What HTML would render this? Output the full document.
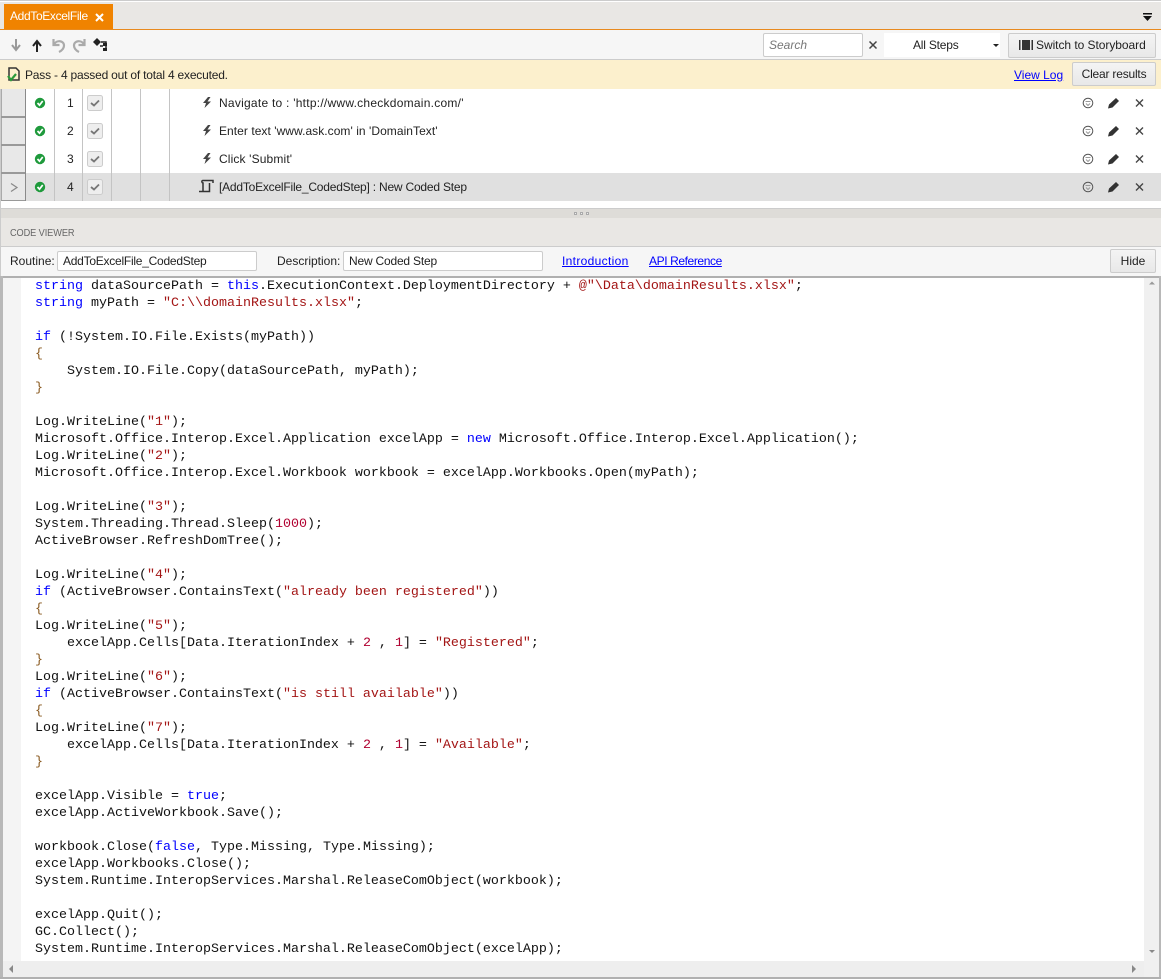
<!DOCTYPE html>
<html><head><meta charset="utf-8"><style>
html,body{margin:0;padding:0;background:#fff}
body{width:1161px;height:979px;position:relative;overflow:hidden;font-family:"Liberation Sans",sans-serif;font-size:12px;color:#222}
.a{position:absolute;white-space:nowrap}
.btn{position:absolute;box-sizing:border-box;background:linear-gradient(#f4f4f4,#e8e8e8);border:1px solid #ccc;border-radius:2px;text-align:center;color:#222}
.in{position:absolute;box-sizing:border-box;background:#fff;border:1px solid #ccc;border-radius:2px;line-height:18px;padding-left:5px}
.v{position:absolute;width:1px;background:#c4c4c4}
.t{position:absolute;left:219px;white-space:nowrap;line-height:16px}
a{color:#00f;text-decoration:underline;position:absolute;white-space:nowrap}
pre{position:absolute;left:35px;top:278px;margin:0;font:13.333px/17px "Liberation Mono",monospace;color:#111}
i{font-style:normal;color:#00f} b{font-weight:normal;color:#a31515} u{text-decoration:none;color:#8a5a20} s{text-decoration:none;color:#b00030}
svg{position:absolute;overflow:visible}
</style></head><body>
<div class="a" style="left:0;top:0;width:1161px;height:1px;background:#ccc"></div>
<div class="a" style="left:0;top:2px;width:1161px;height:27px;background:#e9e7e4"></div>
<div class="a" style="left:4px;top:4px;width:109px;height:25px;background:#f08300;color:#fff;line-height:25px;text-indent:6px;letter-spacing:-.35px">AddToExcelFile</div>
<svg style="left:95px;top:13px" width="9" height="9"><path d="M1 1L8 8M8 1L1 8" stroke="#fff" stroke-width="2"/></svg>
<div class="a" style="left:0;top:29px;width:1161px;height:1px;background:#e88a1e"></div>
<svg style="left:1143px;top:13px" width="9" height="8"><rect width="9" height="1.500" fill="#111"/><path d="M0 3h9L4.500 8z" fill="#111"/></svg>

<div class="a" style="left:0;top:30px;width:1161px;height:29px;background:#f6f6f6"></div>
<div class="a" style="left:0;top:59px;width:1161px;height:1px;background:#ccc"></div>
<svg style="left:11px;top:39px" width="10" height="12"><path d="M5 0V10M1 6L5 11L9 6" stroke="#999" stroke-width="2" fill="none"/></svg>
<svg style="left:32px;top:40px" width="10" height="12"><path d="M5 12V2M1 6L5 1L9 6" stroke="#222" stroke-width="2" fill="none"/></svg>
<svg style="left:52px;top:38px" width="13" height="15"><path d="M1.500 1V7H7.500M2 6.500C4.500 1.500 12 2.500 12 7.500C12 10.500 10 12.500 7 14" stroke="#aaa" stroke-width="2.200" fill="none"/></svg>
<svg style="left:73px;top:38px" width="13" height="15"><path d="M11.500 1V7H5.500M11 6.500C8.500 1.500 1 2.500 1 7.500C1 10.500 3 12.500 6 14" stroke="#aaa" stroke-width="2.200" fill="none"/></svg>
<svg style="left:93px;top:38px" width="15" height="14"><path d="M0 4L4 0L8 4L4 8z" fill="#222"/><path d="M8 4H13V6M10 12H13V6M7 8H10" stroke="#222" stroke-width="1.500" fill="none"/><rect x="10" y="5" width="4" height="3" fill="#222"/><rect x="10" y="10" width="4" height="3" fill="#222"/></svg>
<div class="in" style="left:763px;top:33px;width:100px;height:24px;line-height:22px;color:#777;font-style:italic">Search</div>
<svg style="left:869px;top:41px" width="8" height="8"><path d="M.5 .5L7.500 7.500M7.500 .5L.5 7.500" stroke="#444" stroke-width="1.500"/></svg>
<div class="a" style="left:884px;top:33px;width:116px;height:24px;background:#fff"></div>
<div class="a" style="left:913px;top:37px;line-height:16px;letter-spacing:-.2px">All Steps</div>
<svg style="left:993px;top:44px" width="6" height="3"><path d="M0 0H6L3 3z" fill="#222"/></svg>
<div class="btn" style="left:1008px;top:33px;width:148px;height:25px"></div>
<div class="a" style="left:1036px;top:37px;line-height:16px;letter-spacing:-.05px">Switch to Storyboard</div>
<svg style="left:1019px;top:40px" width="14" height="10"><rect width="1.500" height="10" fill="#333"/><rect x="3" width="8" height="10" fill="#333"/><rect x="12.500" width="1.500" height="10" fill="#333"/></svg>

<div class="a" style="left:0;top:60px;width:1161px;height:29px;background:#fcf0cd"></div>
<svg style="left:7px;top:67px" width="14" height="15"><path d="M2 1H9L12 4V13H2z" fill="none" stroke="#333" stroke-width="1.500"/><path d="M1 9L4 13L9 7" fill="none" stroke="#2a9a3a" stroke-width="2.200"/></svg>
<div class="a" style="left:25px;top:67px;line-height:16px;letter-spacing:-.2px">Pass - 4 passed out of total 4 executed.</div>
<a style="left:1014px;top:67px;line-height:16px">View Log</a>
<div class="btn" style="left:1072px;top:62px;width:84px;height:24px;line-height:22px;letter-spacing:-.2px">Clear results</div>

<!-- rows -->
<div class="a" style="left:1px;top:173px;width:1160px;height:28px;background:#e0e0e0"></div>
<div class="a" style="left:1px;top:89px;width:24px;height:112px;background:#e8e8e8"></div>
<div class="a" style="left:0;top:89px;width:1px;height:187px;background:#ccc"></div>
<div class="a" style="left:1px;top:89px;width:1px;height:112px;background:#aaa"></div>
<div class="a" style="left:1px;top:116px;width:25px;height:2px;background:#999"></div>
<div class="a" style="left:1px;top:144px;width:25px;height:2px;background:#999"></div>
<div class="a" style="left:1px;top:172px;width:25px;height:2px;background:#999"></div>
<div class="a" style="left:1px;top:200px;width:25px;height:1px;background:#999"></div>
<div class="v" style="left:25px;top:89px;height:112px;background:#8a8a8a"></div>
<div class="v" style="left:54px;top:89px;height:112px"></div>
<div class="v" style="left:82px;top:89px;height:112px"></div>
<div class="v" style="left:111px;top:89px;height:112px"></div>
<div class="v" style="left:140px;top:89px;height:112px"></div>
<div class="v" style="left:169px;top:89px;height:112px"></div>
<svg style="left:10px;top:183px" width="8" height="9"><path d="M1 .5L7 4.500L1 8.500" stroke="#888" stroke-width="1.200" fill="none"/></svg>

<svg style="left:0;top:0" width="1161" height="979">
<defs>
<g id="ok"><circle cx="5" cy="5" r="5.200" fill="#1f9a3c"/><path d="M2.500 5L4.500 7.200L7.700 3" stroke="#fff" stroke-width="1.700" fill="none"/></g>
<g id="cb"><rect x=".5" y=".5" width="15" height="15" rx="2" fill="#eee" stroke="#ccc"/><path d="M4 8L7 10.500L12 5.500" stroke="#777" stroke-width="1.800" fill="none"/></g>
<path id="bolt" d="M6 0L1 6H4L2.500 11L9 4.500H5.500L8.500 0z" fill="#444"/>
<g id="act"><circle cx="0" cy="0" r="4.800" fill="none" stroke="#555"/><path d="M-2.500 -1.500H2.500M-2 .5L0 2.500L2 .5" stroke="#999" fill="none"/>
<path d="M20 5.500L21 1.500L28 -5L31 -2L24.500 4.500z" fill="#333"/>
<path d="M48 -3.500L55 3.500M55 -3.500L48 3.500" stroke="#444" stroke-width="1.400"/></g>
</defs>
<use href="#ok" x="35" y="98"/><use href="#ok" x="35" y="126"/><use href="#ok" x="35" y="154"/><use href="#ok" x="35" y="182"/>
<use href="#cb" x="87" y="95"/><use href="#cb" x="87" y="123"/><use href="#cb" x="87" y="151"/><use href="#cb" x="87" y="179"/>
<use href="#bolt" x="202" y="97"/><use href="#bolt" x="202" y="125"/><use href="#bolt" x="202" y="153"/>
<path d="M203 180.500H213V183M203 180.500C201 180.500 202 183 203 183V191.500M199 191.500H209.500V183" fill="none" stroke="#333" stroke-width="1.500"/>
<use href="#act" x="1088" y="103"/><use href="#act" x="1088" y="131"/><use href="#act" x="1088" y="159"/><use href="#act" x="1088" y="187"/>
</svg>
<div class="a" style="left:67px;top:95px;line-height:16px">1</div>
<div class="a" style="left:67px;top:123px;line-height:16px">2</div>
<div class="a" style="left:67px;top:151px;line-height:16px">3</div>
<div class="a" style="left:67px;top:179px;line-height:16px">4</div>
<div class="t" style="top:95px;letter-spacing:.25px">Navigate to : 'http://www.checkdomain.com/'</div>
<div class="t" style="top:123px;letter-spacing:.05px">Enter text 'www.ask.com' in 'DomainText'</div>
<div class="t" style="top:151px;letter-spacing:.14px">Click 'Submit'</div>
<div class="t" style="top:179px;letter-spacing:-.21px">[AddToExcelFile_CodedStep] : New Coded Step</div>

<!-- splitter -->
<div class="a" style="left:1px;top:208px;width:1160px;height:10px;background:#dedcd8;border-top:1px solid #ccc;box-sizing:border-box"></div>
<div class="a" style="left:574px;top:212px;width:3px;height:3px;border:1px solid #aaa;background:#eee;box-sizing:border-box"></div>
<div class="a" style="left:580px;top:212px;width:3px;height:3px;border:1px solid #aaa;background:#eee;box-sizing:border-box"></div>
<div class="a" style="left:586px;top:212px;width:3px;height:3px;border:1px solid #aaa;background:#eee;box-sizing:border-box"></div>
<div class="a" style="left:1px;top:218px;width:1160px;height:28px;background:#e9e7e4"></div>
<div class="a" style="left:10px;top:225px;height:14px;font-size:10px;line-height:14px;color:#666;letter-spacing:-.1px;transform:translateY(2px) scaleX(.92);transform-origin:0 0">CODE VIEWER</div>
<div class="a" style="left:1px;top:246px;width:1160px;height:1px;background:#ccc"></div>
<div class="a" style="left:1px;top:247px;width:1160px;height:29px;background:#f6f6f6"></div>
<div class="a" style="left:10px;top:253px;line-height:16px">Routine:</div>
<div class="in" style="left:57px;top:251px;width:200px;height:20px;letter-spacing:-.25px">AddToExcelFile_CodedStep</div>
<div class="a" style="left:277px;top:253px;line-height:16px">Description:</div>
<div class="in" style="left:343px;top:251px;width:200px;height:20px;letter-spacing:-.2px">New Coded Step</div>
<a style="left:562px;top:253px;line-height:16px;letter-spacing:.33px">Introduction</a>
<a style="left:649px;top:253px;line-height:16px;letter-spacing:-.4px">API Reference</a>
<div class="btn" style="left:1110px;top:249px;width:46px;height:24px;line-height:22px">Hide</div>

<!-- editor -->
<div class="a" style="left:0;top:276px;width:1161px;height:2px;background:#b0b0b0"></div>
<div class="a" style="left:0;top:276px;width:3px;height:703px;background:#b8b8b8"></div>
<div class="a" style="left:1159px;top:276px;width:2px;height:703px;background:#b8b8b8"></div>
<div class="a" style="left:0;top:977px;width:1161px;height:2px;background:#b0b0b0"></div>
<div class="a" style="left:3px;top:278px;width:18px;height:683px;background:#f4f4f4"></div>
<div class="a" style="left:3px;top:961px;width:1141px;height:16px;background:#eee"></div>
<div class="a" style="left:1144px;top:278px;width:15px;height:699px;background:#f0f0f0"></div>
<svg style="left:0;top:0" width="1161" height="979"><path d="M1149 284.500H1155L1152 281.500z" fill="#999"/><path d="M1149 950H1155L1152 953z" fill="#888"/><path d="M9 969L13 965V973z" fill="#888"/><path d="M1132 965V973L1136 969z" fill="#888"/></svg>
<pre><i>string</i> dataSourcePath = <i>this</i>.ExecutionContext.DeploymentDirectory + <b>@"\Data\domainResults.xlsx"</b>;
<i>string</i> myPath = <b>"C:\\domainResults.xlsx"</b>;

<i>if</i> (!System.IO.File.Exists(myPath))
<u>{</u>
    System.IO.File.Copy(dataSourcePath, myPath);
<u>}</u>

Log.WriteLine(<b>"1"</b>);
Microsoft.Office.Interop.Excel.Application excelApp = <i>new</i> Microsoft.Office.Interop.Excel.Application();
Log.WriteLine(<b>"2"</b>);
Microsoft.Office.Interop.Excel.Workbook workbook = excelApp.Workbooks.Open(myPath);

Log.WriteLine(<b>"3"</b>);
System.Threading.Thread.Sleep(<s>1000</s>);
ActiveBrowser.RefreshDomTree();

Log.WriteLine(<b>"4"</b>);
<i>if</i> (ActiveBrowser.ContainsText(<b>"already been registered"</b>))
<u>{</u>
Log.WriteLine(<b>"5"</b>);
    excelApp.Cells[Data.IterationIndex + <s>2</s> , <s>1</s>] = <b>"Registered"</b>;
<u>}</u>
Log.WriteLine(<b>"6"</b>);
<i>if</i> (ActiveBrowser.ContainsText(<b>"is still available"</b>))
<u>{</u>
Log.WriteLine(<b>"7"</b>);
    excelApp.Cells[Data.IterationIndex + <s>2</s> , <s>1</s>] = <b>"Available"</b>;
<u>}</u>

excelApp.Visible = <i>true</i>;
excelApp.ActiveWorkbook.Save();

workbook.Close(<i>false</i>, Type.Missing, Type.Missing);
excelApp.Workbooks.Close();
System.Runtime.InteropServices.Marshal.ReleaseComObject(workbook);

excelApp.Quit();
GC.Collect();
System.Runtime.InteropServices.Marshal.ReleaseComObject(excelApp);</pre>
</body></html>
